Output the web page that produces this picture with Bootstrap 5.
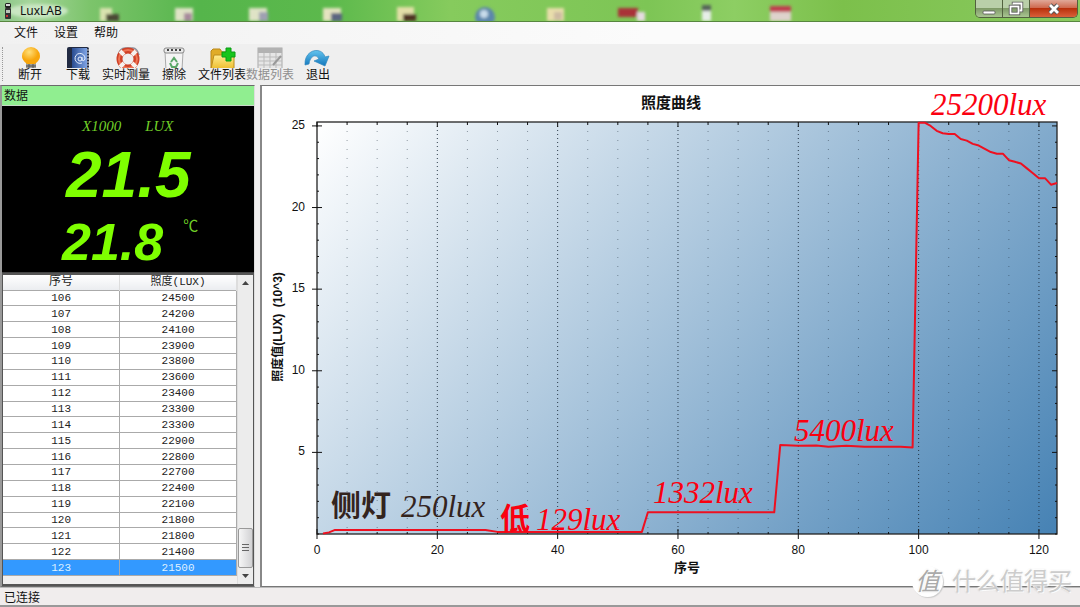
<!DOCTYPE html>
<html lang="zh-CN">
<head>
<meta charset="utf-8">
<meta name="viewport" content="width=device-width, initial-scale=1">
<title>LuxLAB</title>
<link href="https://cdn.jsdelivr.net/npm/bootstrap@5.3.0/dist/css/bootstrap.min.css" rel="stylesheet">
<style>
  body { font: 12px/16px "Noto Sans", "Noto Sans CJK SC", sans-serif; color: #111; background: #f0efef; }
  .title-bar { height: 22px; background: linear-gradient(90deg, #8cc688 0, #a5d59b 30px, #7cc46b 90px, #55b54b 200px, #5cb94c 330px, #86cb5d 450px, #7dc555 60%, #8dce63 68%, #7cc04b 78%, #8aca60 100%); border-bottom: 1px solid #57863f; }
  .title-bar .backdrop { z-index: 0; }
  .title-bar .caption, .title-bar .win-buttons { z-index: 1; }
  .win-buttons { height: 18px; margin-right: 2px; border: 1px solid #52613f; border-top: 0; border-radius: 0 0 5px 5px; overflow: hidden; }
  .win-buttons button { border: 0; border-right: 1px solid #52613f; padding: 0; width: 27px; background: linear-gradient(#b9cfa9 45%, #7f9a68 50%, #a9c592); }
  .win-buttons svg { display: block; margin: 0 auto; }
  .win-buttons .btn-quit { width: 47px; border-right: 0; background: linear-gradient(#e0a898 0, #cf6a50 45%, #b9300c 50%, #d9603a); }
  .menu-bar { height: 22px; background: linear-gradient(90deg, #f1f1f1, #fbfbfb 60%); padding-left: 6px; }
  .menu-bar a { color: #111; padding: 0 8px; }
  .tool-bar { height: 41px; background: #efefef; padding-left: 2px; padding-top: 3px; }
  .tool-bar .grip { width: 4px; height: 34px; border-left: 1px dotted #999; }
  .tool-btn { width: 48px; border: 0; padding: 0; background: none; color: #111; line-height: 14px; white-space: nowrap; }
  .tool-btn svg { display: block; width: 28px; height: 21px; margin: 0 auto; }
  .tool-btn:disabled { color: #8e8e8e; }
  .data-pane { width: 255px; border: 1px solid #6a6a6a; border-left: 2px solid #999; border-right-color: #ddd; background: #f0efef; }
  .data-head { height: 20px; line-height: 19px; padding-left: 2px; background: #90ee90; border-bottom: 1px solid #c8d8c8; }
  .meter { height: 167px; background: #000; color: #7fff00; border-bottom: 1px solid #444; padding-top: 12px; }
  .meter-units { font: italic 15px/16px "Liberation Serif", serif; padding-left: 80px; gap: 24px; color: #70cf28; }
  .led { font-family: "Liberation Sans Narrow", "Liberation Sans", sans-serif; font-style: italic; font-weight: bold; }
  .led-lux { font-size: 64px; line-height: 74px; padding-left: 64px; margin-top: 4px; }
  .led-temp { font-size: 52px; line-height: 60px; padding-left: 60px; gap: 20px; }
  .led-temp .unit-c { font: 15px/28px "Liberation Serif", "Noto Sans CJK SC", serif; color: #70cf28; }
  .grid-box { border: 1px solid #555; border-width: 2px 1px 2px 1px; }
  .log-table { font: 11px/13px "Liberation Mono", "Noto Sans CJK SC", monospace; height: 301px; border-collapse: collapse; table-layout: fixed; text-align: center; background: #fff; color: #222; }
  .log-table th { font-weight: normal; font-size: 12px; height: 15px; background: linear-gradient(#fff, #ebedf0); border-right: 1px solid #ddd; }
  .log-table .lux-head { font-size: 11px; }
  .log-table td { border: 1px solid #aaa; border-left: 0; }
  .log-table th { padding: 0; }
  .log-table td { padding: 1px 0 0; }
  .log-table .picked td { background: #3399ff; color: #dff0ff; border-color: #3399ff #8ab 0 #3399ff; }
  .scroll { width: 16px; background: #ececec; border-left: 1px solid #ddd; }
  .scroll .arrow { height: 16px; }
  .scroll .thumb { height: 40px; border: 1px solid #999; border-radius: 2px; background: linear-gradient(90deg, #f6f6f6, #d2d2d4); }
  .chart-pane { background: #fff; border: 1px solid #777; border-left-color: #888; border-left-width: 2px; border-right: 0; margin-left: 5px; }
  .chart-pane text { font-family: "Liberation Sans", "Noto Sans CJK SC", sans-serif; font-size: 12px; fill: #111; }
  .chart-pane .strong-label { font-weight: bold; }
  .chart-pane .axis-name { font-size: 13px; }
  .chart-pane .chart-title { font-size: 15px; font-weight: bold; }
  .chart-pane .note { font-family: "Liberation Serif", "Noto Sans CJK SC", serif; font-style: italic; font-size: 31px; fill: #fb0010; }
  .chart-pane .note-cjk { font-style: normal; font-weight: bold; font-size: 30px; }
  .chart-pane .note-dark { fill: #33241e; }
  .status-bar { height: 20px; background: #f0eded; border-top: 1px solid #bbb; border-bottom: 2px solid #999; line-height: 20px; padding-left: 4px; }
  .watermark { right: 8px; bottom: 10px; gap: 9px; font-size: 24px; line-height: 32px; color: #ccc; text-shadow: 1px 1px 1px #fff, -1px -1px 1px #fff, 0 0 2px #aaa; }
  .watermark .seal { width: 31px; height: 31px; border-radius: 50%; background: #fff; color: #aaa; box-shadow: 1px 1px 1px #ccc; font-style: italic; line-height: 30px; text-align: center; }
</style>
<script defer src="https://cdn.jsdelivr.net/npm/bootstrap@5.3.0/dist/js/bootstrap.bundle.min.js"></script>
</head>
<body class="d-flex flex-column vh-100 overflow-hidden position-relative">

<header class="title-bar d-flex justify-content-between position-relative flex-shrink-0">
  <svg class="backdrop position-absolute top-0 start-0 w-100 h-100" viewBox="0 0 1080 21" preserveAspectRatio="none" aria-hidden="true">
    <defs><filter id="soft" x="-20%" y="-20%" width="140%" height="140%"><feGaussianBlur stdDeviation="1.8"/></filter></defs>
    <g filter="url(#soft)">
      <rect x="100" y="8" width="12" height="13" fill="#d9e2af"/><rect x="106" y="14" width="13" height="7" fill="#4b4a34"/>
      <rect x="175" y="8" width="18" height="13" fill="#dfe3c6"/><rect x="184" y="13" width="8" height="8" fill="#a78a9c"/>
      <rect x="249" y="8" width="18" height="13" fill="#dfe3c6"/><rect x="259" y="12" width="9" height="9" fill="#9fa0b2"/>
      <rect x="323" y="8" width="18" height="13" fill="#e4e3c0"/><rect x="331" y="13" width="11" height="8" fill="#5c6580"/>
      <rect x="397" y="7" width="17" height="14" fill="#e3dfa8"/><rect x="403" y="14" width="13" height="7" fill="#503024"/>
      <circle cx="485" cy="17" r="10" fill="#5c86ac"/><circle cx="484" cy="14" r="4" fill="#c8dceb"/>
      <rect x="547" y="8" width="17" height="13" fill="#e8deab"/><rect x="554" y="12" width="8" height="8" fill="#cdbba2"/>
      <rect x="618" y="8" width="20" height="9" fill="#a93037"/><rect x="637" y="12" width="8" height="9" fill="#e5dce0"/>
      <rect x="702" y="5" width="9" height="6" fill="#56655a"/><rect x="702" y="11" width="9" height="10" fill="#e6eee8"/>
      <rect x="770" y="6" width="21" height="6" fill="#c03c50"/><rect x="770" y="12" width="21" height="9" fill="#ded2cc"/>
      <ellipse cx="38" cy="11" rx="30" ry="7" fill="#c9e6c2"/>
    </g>
  </svg>
  <div class="caption d-flex align-items-center position-relative ps-1">
    <svg width="8" height="16" viewBox="0 0 8 16" aria-hidden="true"><rect x="1" width="6" height="5" rx="1.500" fill="#222"/><rect x="1" y="5" width="6" height="11" rx="1" fill="#333"/><rect x="2" y="1" width="4" height="2" fill="#d8d8d8"/><rect x="2" y="7" width="4" height="3" fill="#b9c7b8"/><rect x="2" y="12" width="2" height="2" fill="#c33"/></svg>
    <span class="ps-2">LuxLAB</span>
  </div>
  <div class="win-buttons d-flex position-relative">
    <button type="button" aria-label="最小化"><svg width="16" height="16" viewBox="0 0 16 16" aria-hidden="true"><rect x="2" y="10" width="12" height="3" rx="1" fill="#fff" stroke="#545454" stroke-width=".8"/></svg></button>
    <button type="button" aria-label="还原"><svg width="16" height="16" viewBox="0 0 16 16" aria-hidden="true"><g fill="none" stroke="#555" stroke-width="3.400"><path d="M5.500 3.500V2.500h8v7h-2"/><rect x="2.500" y="5.500" width="8" height="7"/></g><g fill="none" stroke="#fff" stroke-width="1.800"><path d="M5.500 3.500V2.500h8v7h-2"/><rect x="2.500" y="5.500" width="8" height="7"/></g></svg></button>
    <button type="button" class="btn-quit" aria-label="关闭"><svg width="16" height="16" viewBox="0 0 16 16" aria-hidden="true"><path d="M4 4l8 8M12 4l-8 8" stroke="#555" stroke-width="4.600"/><path d="M4 4l8 8M12 4l-8 8" stroke="#fff" stroke-width="2.800"/></svg></button>
  </div>
</header>

<nav class="menu-bar d-flex align-items-center flex-shrink-0">
  <a class="text-decoration-none" href="#">文件</a>
  <a class="text-decoration-none" href="#">设置</a>
  <a class="text-decoration-none" href="#">帮助</a>
</nav>

<div class="tool-bar d-flex align-items-start flex-shrink-0" role="toolbar" aria-label="工具栏">
  <span class="grip"></span>
  <button class="tool-btn" type="button"><svg viewBox="0 0 28 21" aria-hidden="true"><defs><radialGradient id="bulb" cx=".4" cy=".3"><stop offset="0" stop-color="#ffe07a"/><stop offset="1" stop-color="#f7a60c"/></radialGradient></defs><path d="M10 14h10v8h-10z" fill="#9d9d98"/><path d="M10 19h10M13 17v6M17 17v6" stroke="#555"/><path d="M15 0a9 9 0 0 1 9 9c0 4-3 6-5 8h-8c-2-2-5-4-5-8a9 9 0 0 1 9-9z" fill="url(#bulb)"/></svg>断开</button>
  <button class="tool-btn" type="button"><svg viewBox="0 0 28 21" aria-hidden="true"><defs><linearGradient id="book"><stop offset="0" stop-color="#294c91"/><stop offset="1" stop-color="#7fa4e5"/></linearGradient></defs><rect x="3" width="22" height="23" rx="2" fill="#222b43"/><rect x="8" y="1" width="15" height="20" fill="url(#book)"/><path d="M24 2v19" stroke="#ddd" stroke-dasharray="2 1"/><circle cx="16" cy="12" r="2" fill="none" stroke="#e8f0ff"/><path d="M18 10v3q2 2 3-1a5 5 0 1 0-3 4" fill="none" stroke="#e8f0ff"/></svg>下载</button>
  <button class="tool-btn" type="button"><svg viewBox="0 0 28 21" aria-hidden="true"><path d="M6 8Q8 1 13 1h8q4 0 6 7" fill="none" stroke="#8e8e99" stroke-width="1.500"/><circle cx="16" cy="12" r="8.500" fill="none" stroke="#cf4127" stroke-width="6"/><circle cx="16" cy="12" r="9" fill="none" stroke="#ef7555" stroke-width="2"/><path d="M8 4l4 4M24 4l-4 4M8 20l4-4M24 20l-4-4" stroke="#f5f1ee" stroke-width="4"/></svg>实时测量</button>
  <button class="tool-btn" type="button"><svg viewBox="0 0 28 21" aria-hidden="true"><path d="M5 5h18l-1 18H6z" fill="#f4f4f4" stroke="#aaa"/><rect x="4" y="1" width="20" height="5" rx="2" fill="#e9e9e9" stroke="#888"/><path d="M7 3h2M11 3h2M15 3h2M19 3h2" stroke="#444" stroke-width="2"/><path d="M11 15l3-4 3 4M18 16l-2 4h-2M10 16l2 4h2" fill="none" stroke="#5ba868" stroke-width="2"/></svg>擦除</button>
  <button class="tool-btn" type="button"><svg viewBox="0 0 28 21" aria-hidden="true"><defs><linearGradient id="folder" x2="0" y2="1"><stop offset="0" stop-color="#ffed91"/><stop offset="1" stop-color="#ecb925"/></linearGradient></defs><path d="M3 22V4l2-2h7l2 3h9v6" fill="#e0ac28" stroke="#b98718"/><path d="M3 22L6 8h19l1 1v14H4z" fill="url(#folder)" stroke="#bd8c1b"/><path d="M18 1h5v4h4v5h-4v4h-5v-4h-4V5h4z" fill="#18c51c" stroke="#0b9c15"/></svg>文件列表</button>
  <button class="tool-btn" type="button" disabled><svg viewBox="0 0 28 21" aria-hidden="true"><rect x="2" y="1" width="24" height="21" fill="#e6e6e6" stroke="#aaa"/><rect x="2" y="1" width="24" height="5" fill="#b2b2b2"/><path d="M2 10h24M2 14h24M2 18h24M8 6v16M14 6v16M20 6v16" stroke="#bbb"/><path d="M25 9l-8 9" stroke="#999" stroke-width="2"/></svg>数据列表</button>
  <button class="tool-btn" type="button"><svg viewBox="0 0 28 21" aria-hidden="true"><defs><linearGradient id="redo" x2="0" y2="1"><stop offset="0" stop-color="#63c4ee"/><stop offset="1" stop-color="#1377bd"/></linearGradient></defs><path d="M1 18C0 2 18-1 21 10l4-1-4 10-11-5 5-2C12 6 6 9 5 17z" fill="url(#redo)" stroke="#2f86bd" stroke-width=".7"/></svg>退出</button>
</div>

<main class="d-flex flex-fill overflow-hidden">
  <section class="data-pane d-flex flex-column flex-shrink-0">
    <div class="data-head flex-shrink-0">数据</div>
    <div class="meter flex-shrink-0">
      <div class="meter-units d-flex"><span>X1000</span><span>LUX</span></div>
      <div class="led led-lux">21.5</div>
      <div class="led-temp d-flex"><span class="led">21.8</span><span class="unit-c">℃</span></div>
    </div>
    <div class="grid-box d-flex flex-fill overflow-hidden">
      <div class="flex-fill">
      <table class="log-table w-100">
        <thead><tr><th scope="col">序号</th><th scope="col" class="lux-head">照度(LUX)</th></tr></thead>
        <tbody>
          <tr><td>106</td><td>24500</td></tr>
          <tr><td>107</td><td>24200</td></tr>
          <tr><td>108</td><td>24100</td></tr>
          <tr><td>109</td><td>23900</td></tr>
          <tr><td>110</td><td>23800</td></tr>
          <tr><td>111</td><td>23600</td></tr>
          <tr><td>112</td><td>23400</td></tr>
          <tr><td>113</td><td>23300</td></tr>
          <tr><td>114</td><td>23300</td></tr>
          <tr><td>115</td><td>22900</td></tr>
          <tr><td>116</td><td>22800</td></tr>
          <tr><td>117</td><td>22700</td></tr>
          <tr><td>118</td><td>22400</td></tr>
          <tr><td>119</td><td>22100</td></tr>
          <tr><td>120</td><td>21800</td></tr>
          <tr><td>121</td><td>21800</td></tr>
          <tr><td>122</td><td>21400</td></tr>
          <tr class="picked"><td>123</td><td>21500</td></tr>
        </tbody>
      </table>
      </div>
      <div class="scroll d-flex flex-column flex-shrink-0" aria-hidden="true">
        <div class="arrow d-flex align-items-center justify-content-center"><svg width="7" height="4" viewBox="0 0 7 4"><path d="M0 4l3.500-4L7 4z" fill="#444"/></svg></div>
        <div class="flex-fill"></div>
        <div class="thumb d-flex align-items-center justify-content-center"><svg width="7" height="8" viewBox="0 0 7 8"><path d="M0 .5h7M0 3.500h7M0 6.500h7" stroke="#666"/></svg></div>
        <div class="arrow d-flex align-items-center justify-content-center"><svg width="7" height="4" viewBox="0 0 7 4"><path d="M0 0l3.500 4L7 0z" fill="#444"/></svg></div>
      </div>
    </div>
  </section>

  <section class="chart-pane flex-fill overflow-hidden">
    <svg class="d-block w-100 h-100" viewBox="0 0 818 500" role="img" aria-label="照度曲线">
      <defs>
        <linearGradient id="sky" gradientUnits="userSpaceOnUse" x1="0" y1="0" x2="631" y2="539">
          <stop offset="0" stop-color="#fff"/><stop offset="1" stop-color="#4682b4"/>
        </linearGradient>
      </defs>
      <text class="chart-title" x="409" y="22" text-anchor="middle">照度曲线</text>
      <text class="strong-label" transform="translate(20 241) rotate(-90)" text-anchor="middle" xml:space="preserve">照度值(LUX)  (10^3)</text>
      <text class="strong-label axis-name" x="425" y="486" text-anchor="middle">序号</text>
      <g transform="translate(55 36)">
        <rect width="740" height="412" fill="url(#sky)"/>
        <g id="rules" stroke="#1c2a3a"></g>
        <rect width="740" height="412" fill="none" stroke="#222" stroke-width="1.300"/>
        <g id="ticks" stroke="#111"></g>
        <g id="labels"></g>
        <polyline id="series" fill="none" stroke="#ee1020" stroke-width="2" stroke-linejoin="round"/>
        <text class="note note-cjk note-dark" x="14" y="394">侧灯</text>
        <text class="note note-dark" x="84" y="395">250lux</text>
        <text class="note note-cjk" x="183" y="407">低</text>
        <text class="note" x="219" y="408">129lux</text>
        <text class="note" x="336" y="381">1332lux</text>
        <text class="note" x="477" y="319">5400lux</text>
        <text class="note" x="614" y="-7">25200lux</text>
      </g>
    </svg>
  </section>
</main>

<footer class="status-bar flex-shrink-0">已连接</footer>

<div class="watermark position-absolute d-flex align-items-center" aria-hidden="true"><span class="seal">值</span><span>什么值得买</span></div>

<script>
  // Scales: sample index across, thousands of lux upward.
  const W = 740, H = 412;
  const sx = v => v * W / 123, sy = v => H - v * H / 25.24;
  const add = (host, tag, attrs, text) => {
    const el = document.createElementNS('http://www.w3.org/2000/svg', tag);
    for (const k in attrs) el.setAttribute(k, attrs[k]);
    if (text !== undefined) el.textContent = text;
    host.appendChild(el);
  };
  const rules = document.getElementById('rules'), ticks = document.getElementById('ticks'), labels = document.getElementById('labels');

  for (let i = 0; i <= 120; i += 5) {
    const x = sx(i), major = i % 20 === 0;
    if (i) add(rules, 'line', { x1: x, x2: x, y1: 0, y2: H, 'stroke-dasharray': major ? '1 3' : '1 8', 'stroke-opacity': major ? .9 : .45 });
    add(ticks, 'line', { x1: x, x2: x, y1: 0, y2: major ? 5 : 3 });
    add(ticks, 'line', { x1: x, x2: x, y1: H - (major ? 5 : 2), y2: H + (major ? 5 : 0) });
    if (major) add(labels, 'text', { x: x, y: H + 20, 'text-anchor': 'middle' }, i);
  }
  for (let i = 0; i <= 25; i++) {
    const y = sy(i), major = i > 0 && i % 5 === 0;
    add(ticks, 'line', { x1: major ? -5 : 0, x2: major ? 5 : 2, y1: y, y2: y });
    add(ticks, 'line', { x1: W - (major ? 5 : 2), x2: W, y1: y, y2: y });
    if (major) add(labels, 'text', { x: -12, y: y + 3, 'text-anchor': 'end' }, i);
  }

  const points = [[1, .03], [2, .1], [3, .25], [28, .25], [30, .13], [54, .13], [55, 1.33], [76, 1.33], [77, 5.45],
    [80, 5.4], [83, 5.42], [85, 5.35], [88, 5.4], [91, 5.35], [97, 5.35], [99, 5.3], [100, 25.2], [101, 25.2], [102, 25], [103, 24.7],
    [104, 24.55], [105, 24.5], [106, 24.5], [107, 24.2], [108, 24.1], [109, 23.9], [110, 23.8], [111, 23.6], [112, 23.4],
    [113, 23.3], [114, 23.3], [115, 22.9], [116, 22.8], [117, 22.7], [118, 22.4], [119, 22.1], [120, 21.8], [121, 21.8],
    [122, 21.4], [123, 21.5]];
  document.getElementById('series').setAttribute('points', points.map(p => sx(p[0]) + ',' + sy(p[1])).join(' '));
</script>
</body>
</html>
